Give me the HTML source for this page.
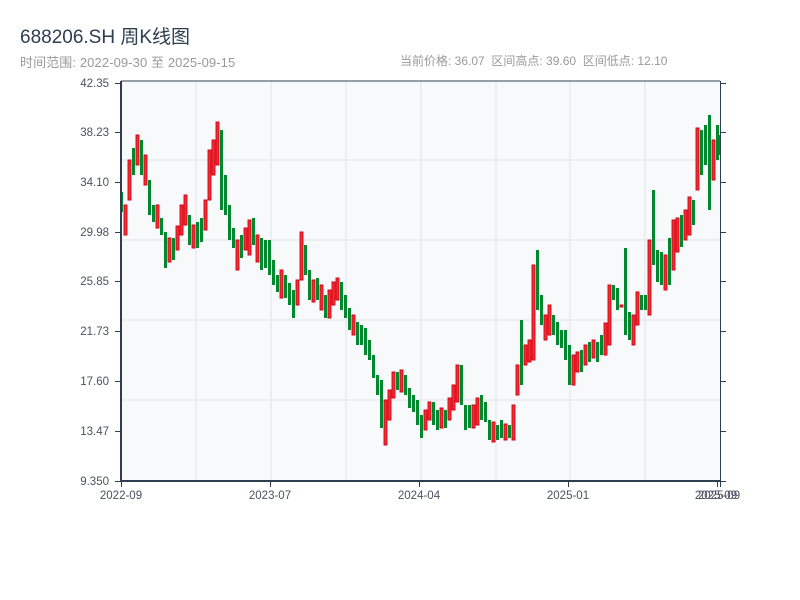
<!DOCTYPE html>
<html><head><meta charset="utf-8"><style>
body{margin:0;background:#fff;width:800px;height:600px;overflow:hidden;font-family:"Liberation Sans","Noto Sans CJK SC",sans-serif}
.t{position:absolute;left:20px;top:22px;font-size:19px;color:#2c3e50}
.s{position:absolute;top:52px;font-size:12px;color:#999}
</style></head><body>
<div class="t">688206.SH 周K线图</div>
<div class="s" style="left:20px;font-size:13px;letter-spacing:0.1px">时间范围: 2022-09-30 至 2025-09-15</div>
<div class="s" style="left:400px">当前价格: 36.07 &nbsp;区间高点: 39.60 &nbsp;区间低点: 12.10</div>
<svg width="800" height="600" style="position:absolute;left:0;top:0" font-family="Liberation Sans, sans-serif" font-size="11.5">
<rect x="121" y="81" width="599" height="400" fill="#f8f9fb"/>
<g stroke="#e1e4ea" stroke-width="1">
<line x1="196" y1="81" x2="196" y2="481"/><line x1="271" y1="81" x2="271" y2="481"/><line x1="346" y1="81" x2="346" y2="481"/><line x1="421" y1="81" x2="421" y2="481"/><line x1="496" y1="81" x2="496" y2="481"/><line x1="570" y1="81" x2="570" y2="481"/><line x1="645" y1="81" x2="645" y2="481"/>
<line x1="121" y1="160" x2="720" y2="160"/><line x1="121" y1="240" x2="720" y2="240"/><line x1="121" y1="320" x2="720" y2="320"/><line x1="121" y1="400" x2="720" y2="400"/>
</g>
<path fill="#00882e" d="M120 192h3V212h-3zM132 148h3V175h-3zM140 140h3V175h-3zM148 180h3V215h-3zM152 205h3V222h-3zM160 218h3V235h-3zM164 232h3V268h-3zM172 238h3V260h-3zM188 215h3V245h-3zM196 222h3V248h-3zM200 218h3V242h-3zM220 130h3V210h-3zM224 175h3V215h-3zM228 205h3V240h-3zM232 228h3V248h-3zM240 235h3V258h-3zM252 218h3V245h-3zM260 238h3V270h-3zM264 240h3V268h-3zM268 240h3V275h-3zM272 260h3V285h-3zM276 275h3V292h-3zM284 275h3V298h-3zM288 283h3V305h-3zM292 290h3V318h-3zM304 245h3V275h-3zM308 270h3V300h-3zM316 278h3V300h-3zM324 295h3V318h-3zM340 282h3V310h-3zM344 295h3V318h-3zM348 308h3V330h-3zM356 322h3V345h-3zM360 325h3V345h-3zM364 328h3V355h-3zM368 340h3V360h-3zM372 355h3V378h-3zM376 375h3V395h-3zM380 380h3V428h-3zM396 372h3V390h-3zM404 375h3V395h-3zM408 388h3V408h-3zM412 395h3V412h-3zM416 400h3V425h-3zM420 415h3V438h-3zM432 402h3V425h-3zM436 410h3V430h-3zM444 410h3V428h-3zM460 365h3V405h-3zM464 405h3V430h-3zM468 405h3V428h-3zM480 395h3V420h-3zM484 402h3V422h-3zM488 420h3V440h-3zM496 425h3V440h-3zM500 420h3V438h-3zM508 425h3V438h-3zM520 320h3V385h-3zM536 250h3V310h-3zM540 295h3V325h-3zM552 315h3V335h-3zM556 322h3V345h-3zM560 330h3V348h-3zM564 330h3V360h-3zM568 345h3V385h-3zM580 350h3V372h-3zM588 342h3V362h-3zM596 342h3V362h-3zM600 335h3V355h-3zM612 285h3V300h-3zM616 288h3V310h-3zM624 248h3V335h-3zM628 312h3V340h-3zM640 295h3V310h-3zM644 295h3V310h-3zM652 190h3V265h-3zM656 250h3V282h-3zM660 252h3V285h-3zM668 238h3V285h-3zM680 215h3V247h-3zM692 200h3V225h-3zM700 130h3V175h-3zM704 125h3V165h-3zM708 115h3V210h-3zM716 125h3V160h-3zM718 135h2V155h-2z"/>
<path fill="#f03030" stroke="#d0021b" stroke-width="0.9" d="M124 205h3V235h-3zM128 160h3V200h-3zM136 135h3V165h-3zM144 155h3V185h-3zM156 205h3V228h-3zM168 238h3V262h-3zM176 226h3V250h-3zM180 205h3V235h-3zM184 195h3V225h-3zM192 225h3V248h-3zM204 200h3V230h-3zM208 150h3V200h-3zM212 140h3V175h-3zM216 122h3V165h-3zM236 240h3V270h-3zM244 228h3V250h-3zM248 220h3V255h-3zM256 235h3V262h-3zM280 270h3V298h-3zM296 280h3V305h-3zM300 232h3V280h-3zM312 280h3V302h-3zM320 285h3V310h-3zM328 290h3V318h-3zM332 282h3V305h-3zM336 278h3V300h-3zM352 315h3V335h-3zM384 400h3V445h-3zM388 390h3V420h-3zM392 372h3V398h-3zM400 370h3V392h-3zM424 410h3V430h-3zM428 402h3V420h-3zM440 408h3V428h-3zM448 398h3V420h-3zM452 385h3V410h-3zM456 365h3V402h-3zM472 405h3V428h-3zM476 398h3V425h-3zM492 422h3V442h-3zM504 424h3V440h-3zM512 405h3V440h-3zM516 365h3V395h-3zM524 345h3V365h-3zM528 340h3V362h-3zM532 265h3V360h-3zM544 315h3V340h-3zM548 305h3V335h-3zM572 355h3V385h-3zM576 352h3V372h-3zM584 345h3V365h-3zM592 340h3V358h-3zM604 323h3V355h-3zM608 285h3V345h-3zM620 305h3V307h-3zM632 315h3V345h-3zM636 292h3V325h-3zM648 240h3V315h-3zM664 255h3V290h-3zM672 220h3V270h-3zM676 218h3V252h-3zM684 210h3V240h-3zM688 197h3V235h-3zM696 128h3V190h-3zM712 140h3V180h-3z"/>
<g stroke="#2c3e50" stroke-width="1">
<line x1="121" y1="81" x2="720" y2="81"/>
<line x1="720.5" y1="81" x2="720.5" y2="481"/>
<line x1="121" y1="81" x2="121" y2="482" stroke-width="2"/>
<line x1="120" y1="481" x2="721" y2="481" stroke-width="2"/>
<path d="M115 83.5h6M115 132.5h6M115 182.5h6M115 232.5h6M115 281.5h6M115 331.5h6M115 381.5h6M115 431.5h6M115 481.5h6M720 83.5h6M720 132.5h6M720 182.5h6M720 232.5h6M720 281.5h6M720 331.5h6M720 381.5h6M720 431.5h6M720 481.5h6M121.5 481v6M270.5 481v6M419.5 481v6M568.5 481v6M717.5 481v6M720.5 481v6"/>
</g>
<g text-anchor="end" fill="#4a5260">
<text x="109" y="87">42.35</text><text x="109" y="136">38.23</text><text x="109" y="186">34.10</text><text x="109" y="236">29.98</text><text x="109" y="285">25.85</text><text x="109" y="335">21.73</text><text x="109" y="385">17.60</text><text x="109" y="435">13.47</text><text x="109" y="485">9.350</text>
</g>
<g text-anchor="middle" fill="#4a5260">
<text x="121" y="499">2022-09</text><text x="270" y="499">2023-07</text><text x="419" y="499">2024-04</text><text x="568" y="499">2025-01</text><text x="716" y="499">2025-09</text><text x="719" y="499">2025-09</text>
</g>
</svg>
</body></html>
